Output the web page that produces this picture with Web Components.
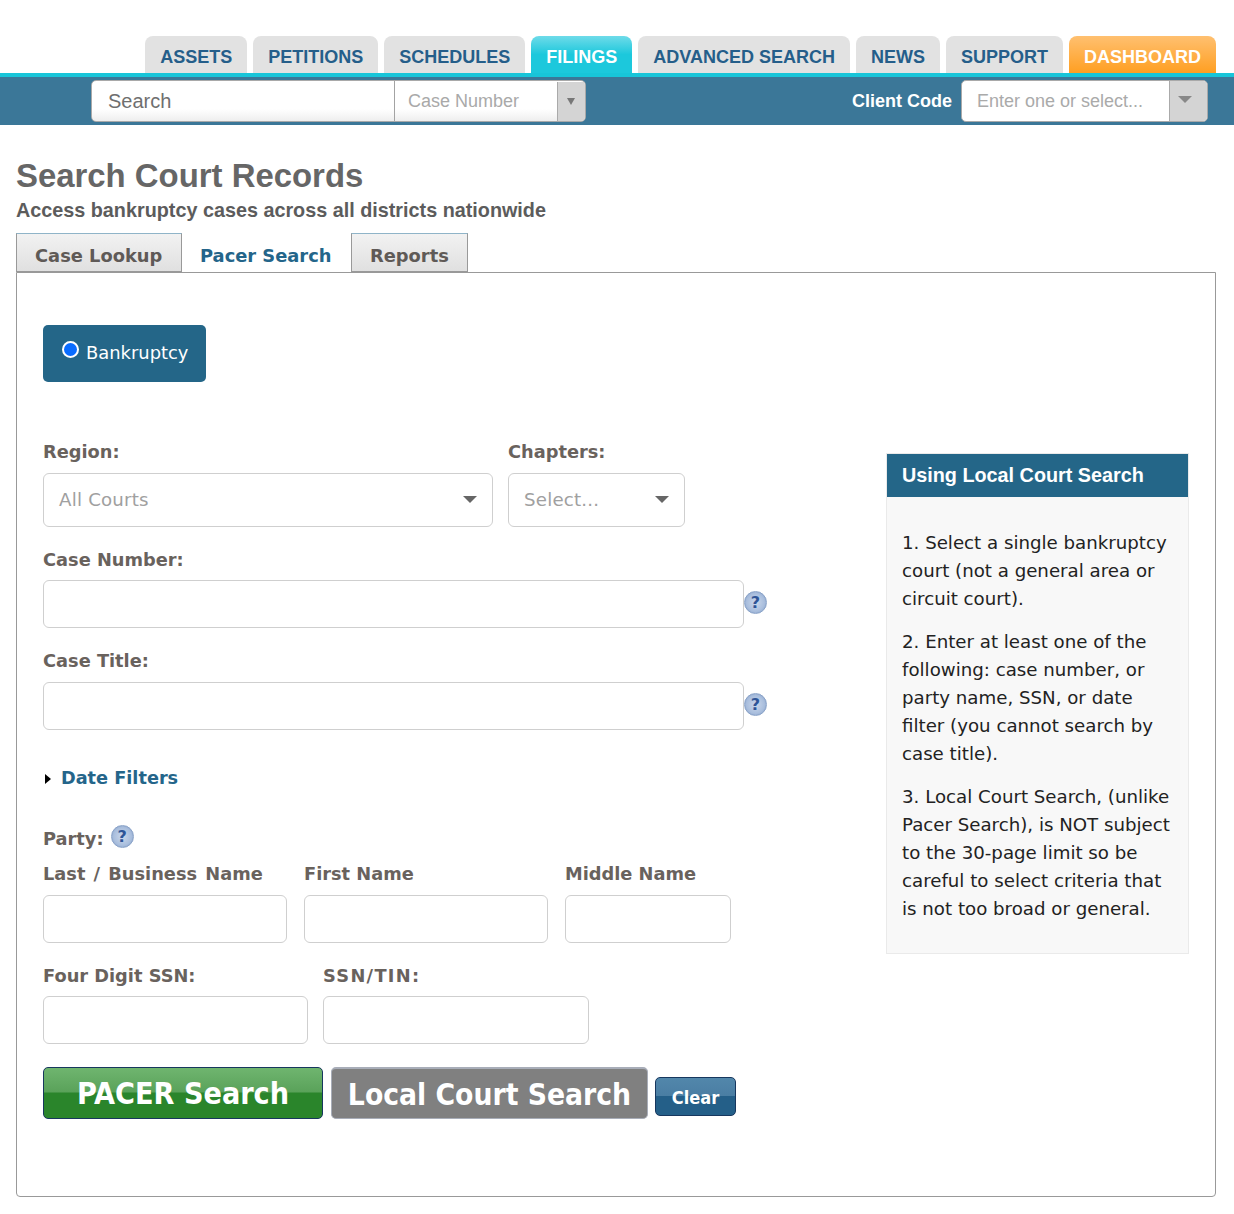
<!DOCTYPE html>
<html>
<head>
<meta charset="utf-8">
<title>Search Court Records</title>
<style>
  html, body { margin: 0; padding: 0; background: #fff; }
  body { font-family: "DejaVu Sans", sans-serif; }
</style>
</head>
<body>
<top-nav>
  <nav-tab>ASSETS</nav-tab>
  <nav-tab>PETITIONS</nav-tab>
  <nav-tab>SCHEDULES</nav-tab>
  <nav-tab kind="active">FILINGS</nav-tab>
  <nav-tab>ADVANCED SEARCH</nav-tab>
  <nav-tab>NEWS</nav-tab>
  <nav-tab>SUPPORT</nav-tab>
  <nav-tab kind="dash">DASHBOARD</nav-tab>
</top-nav>
<search-bar></search-bar>
<page-title heading="Search Court Records">Access bankruptcy cases across all districts nationwide</page-title>
<record-tabs></record-tabs>
<search-panel>
  <pacer-form></pacer-form>
  <info-box slot="aside" heading="Using Local Court Search">
    <p>1. Select a single bankruptcy court (not a general area or circuit court).</p>
    <p>2. Enter at least one of the following: case number, or party name, SSN, or date filter (you cannot search by case title).</p>
    <p>3. Local Court Search, (unlike Pacer Search), is NOT subject to the 30-page limit so be careful to select criteria that is not too broad or general.</p>
  </info-box>
</search-panel>

<script>
class NavTab extends HTMLElement {
  constructor() {
    super();
    const shadow = this.attachShadow({ mode: "open" });
    shadow.innerHTML = `
      <style>
        :host {
          display: block;
          height: 37px;
          padding: 0 15px;
          border-radius: 8px 8px 0 0;
          background: #e2e2e2;
          color: #255e8a;
          font: bold 18px/42px "Liberation Sans", sans-serif;
          white-space: nowrap;
        }
        :host([kind="active"]) {
          background: linear-gradient(#6fdbe9, #1cc8dc 50%);
          color: #fff;
        }
        :host([kind="dash"]) {
          background: linear-gradient(#ffc070, #ff9f22);
          color: #fff;
        }
      </style>
      <slot></slot>
    `;
  }
}

class TopNav extends HTMLElement {
  constructor() {
    super();
    const shadow = this.attachShadow({ mode: "open" });
    shadow.innerHTML = `
      <style>
        :host {
          display: flex;
          justify-content: flex-end;
          gap: 6px;
          padding: 36px 18px 0 0;
          border-bottom: 4px solid #18c5d9;
        }
      </style>
      <slot></slot>
    `;
  }
}

class SearchBar extends HTMLElement {
  constructor() {
    super();
    const shadow = this.attachShadow({ mode: "open" });
    shadow.innerHTML = `
      <style>
        :host {
          display: flex;
          align-items: center;
          height: 48px;
          padding: 0 26px 0 91px;
          background: #3b7798;
          font-family: "Liberation Sans", sans-serif;
        }
        .combo {
          display: flex;
          width: 495px;
          height: 42px;
          box-sizing: border-box;
          border: 1px solid #a9a9a9;
          border-radius: 5px;
          background: linear-gradient(#fff 70%, #eee);
          overflow: hidden;
        }
        .term {
          width: 303px;
          padding-left: 16px;
          box-sizing: border-box;
          border-right: 1px solid #a3a3a3;
          font-size: 20px;
          line-height: 40px;
          color: #6f6f6f;
        }
        .kind {
          flex: 1;
          padding-left: 13px;
          font-size: 18px;
          line-height: 40px;
          color: #a9a9a9;
        }
        .drop {
          display: flex;
          align-items: center;
          justify-content: center;
          width: 27px;
          margin-top: 1px;
          background: #d4d4d4;
          border-left: 1px solid #aaa;
        }
        .tri {
          width: 0;
          height: 0;
          margin-right: 2px;
          border: 4px solid transparent;
          border-top: 7px solid #777;
          border-bottom: 0;
        }
        .client {
          margin-left: auto;
          margin-right: 9px;
          color: #fff;
          font-weight: bold;
          font-size: 18px;
        }
        .code {
          display: flex;
          width: 247px;
          height: 42px;
          box-sizing: border-box;
          border: 1px solid #a9a9a9;
          border-radius: 5px;
          background: #fff;
          overflow: hidden;
        }
        .code span {
          flex: 1;
          padding-left: 15px;
          font-size: 18px;
          line-height: 40px;
          color: #aaa;
        }
        .code .drop { width: 37px; margin: 0; }
        .code .tri { border-width: 7px 7px 0; border-top-color: #888; border-style: solid; border-left-color: transparent; border-right-color: transparent; margin: 0 7px 3px 0; }
      </style>
      <div class="combo">
        <div class="term">Search</div>
        <div class="kind">Case Number</div>
        <div class="drop"><div class="tri"></div></div>
      </div>
      <div class="client">Client Code</div>
      <div class="code"><span>Enter one or select...</span><div class="drop"><div class="tri"></div></div></div>
    `;
  }
}

class PageTitle extends HTMLElement {
  constructor() {
    super();
    const shadow = this.attachShadow({ mode: "open" });
    shadow.innerHTML = `
      <style>
        :host {
          display: block;
          padding: 31px 16px 0;
          font-family: "Liberation Sans", sans-serif;
          color: #666;
        }
        h1 {
          margin: 0;
          font-size: 32.9px;
          line-height: 40px;
          font-weight: bold;
        }
        div {
          font-size: 19.8px;
          line-height: 28px;
          font-weight: bold;
          color: #5c5c5c;
        }
      </style>
      <h1></h1>
      <div><slot></slot></div>
    `;
    shadow.querySelector("h1").textContent = this.getAttribute("heading");
  }
}

class RecordTabs extends HTMLElement {
  constructor() {
    super();
    const shadow = this.attachShadow({ mode: "open" });
    shadow.innerHTML = `
      <style>
        :host {
          display: flex;
          margin: 9px 0 0 16px;
          height: 39px;
          font: bold 17.85px/43px "DejaVu Sans", sans-serif;
          position: relative;
          z-index: 1;
        }
        .tab {
          box-sizing: border-box;
          padding: 0 0 0 18px;
          border: 1px solid #999;
          border-top-color: #8fb4c8;
          background: linear-gradient(#f2f2f2, #e0e0e0);
          color: #5f5a57;
          white-space: nowrap;
        }
        .tab.on {
          background: #fff;
          color: #24658a;
          border: 0;
          border-top: 1px solid #fff;
          height: 39px;
        }
      </style>
      <div class="tab" style="width:166px">Case Lookup</div>
      <div class="tab on" style="width:169px">Pacer Search</div>
      <div class="tab" style="width:117px">Reports</div>
    `;
  }
}

class SearchPanel extends HTMLElement {
  constructor() {
    super();
    const shadow = this.attachShadow({ mode: "open" });
    shadow.innerHTML = `
      <style>
        :host {
          display: flex;
          justify-content: space-between;
          width: 1200px;
          height: 925px;
          box-sizing: border-box;
          margin: 0 0 0 16px;
          padding: 52px 26px 0 26px;
          border: 1px solid #999;
          border-radius: 0 0 4px 4px;
        }
        .side { padding-top: 128px; }
      </style>
      <slot></slot>
      <div class="side"><slot name="aside"></slot></div>
    `;
  }
}

class FormField extends HTMLElement {
  constructor() {
    super();
    const shadow = this.attachShadow({ mode: "open" });
    shadow.innerHTML = `
      <style>
        :host {
          display: block;
          width: var(--w, 244px);
        }
        label {
          display: block;
          height: 22px;
          margin-bottom: var(--gap, 11px);
          font: bold 17.8px/24px "DejaVu Sans", sans-serif;
          letter-spacing: var(--ls, 0);
          word-spacing: var(--ws, 0);
          color: #69625d;
          white-space: nowrap;
        }
        .box {
          display: flex;
          align-items: center;
          justify-content: space-between;
          height: 48px;
          box-sizing: border-box;
          padding: 0 15px 1px;
          border: 1px solid #cfcfcf;
          border-radius: 6px;
          background: #fff;
          font-size: 18.2px;
          letter-spacing: .2px;
          color: #a0a0a0;
        }
        :host([select]) .box { height: 54px; }
        .tri {
          display: none;
          width: 0;
          height: 0;
          border-style: solid;
          border-width: 7px 7.5px 0;
          border-color: #666 transparent transparent;
        }
        :host([select]) .tri { display: block; }
      </style>
      <label></label>
      <div class="box"><span></span><div class="tri"></div></div>
    `;
    shadow.querySelector("label").textContent = this.getAttribute("label");
    shadow.querySelector("span").textContent = this.getAttribute("placeholder") || "";
  }
}

class HelpIcon extends HTMLElement {
  constructor() {
    super();
    const shadow = this.attachShadow({ mode: "open" });
    shadow.innerHTML = `
      <style>
        :host {
          display: inline-flex;
          align-items: center;
          justify-content: center;
          width: 23px;
          height: 23px;
          box-sizing: border-box;
          padding-top: 1px;
          border-radius: 50%;
          border: 1px solid #8aa3c8;
          background: radial-gradient(circle at 50% 50%, #ccd8eb 0, #a9bedd 60%, #7490bf 100%);
          color: #2f5597;
          font: bold 16px/1 "DejaVu Sans", sans-serif;
        }
      </style>
      ?
    `;
  }
}

class PacerForm extends HTMLElement {
  constructor() {
    super();
    const shadow = this.attachShadow({ mode: "open" });
    shadow.innerHTML = `
      <style>
        :host { display: block; width: 724px; font-family: "DejaVu Sans", sans-serif; }
        .court {
          display: flex;
          align-items: center;
          width: 163px;
          height: 57px;
          box-sizing: border-box;
          padding: 0 0 2px 19px;
          border-radius: 5px;
          background: #246688;
          color: #fff;
          font-size: 17.9px;
        }
        .radio {
          width: 17px;
          height: 17px;
          box-sizing: border-box;
          margin: -7px 7px 0 0;
          border: 2px solid #fff;
          border-radius: 50%;
          background: #0a6cff;
        }
        .row { display: flex; gap: 15px; }
        .top { margin-top: 58px; }
        .wide { display: flex; align-items: center; margin-top: 21px; }
        .wide help-icon { margin-top: 29px; }
        .names { gap: 17px; margin-top: 11px; }
        .date {
          display: flex;
          align-items: center;
          margin-top: 36px;
          height: 24px;
          font: bold 17.7px/24px "DejaVu Sans", sans-serif;
          color: #24658a;
        }
        .arrow {
          width: 0;
          height: 0;
          margin: 2px 10px 0 2px;
          border-style: solid;
          border-width: 5px 0 5px 6px;
          border-color: transparent transparent transparent #000;
        }
        .party {
          display: flex;
          align-items: center;
          gap: 7px;
          margin-top: 37px;
          height: 24px;
          font: bold 17.8px/24px "DejaVu Sans", sans-serif;
          color: #69625d;
        }
        .party help-icon { margin-top: -6px; }
        .ssn { margin-top: 21px; }
        .actions { display: flex; align-items: flex-end; gap: 8px; margin-top: 23px; }
        .actions action-btn[kind="clear"] { margin-left: -1px; }
      </style>
      <div class="court"><div class="radio"></div>Bankruptcy</div>
      <div class="row top">
        <form-field select label="Region:" placeholder="All Courts" style="--w:450px"></form-field>
        <form-field select label="Chapters:" placeholder="Select..." style="--w:177px"></form-field>
      </div>
      <div class="wide"><form-field label="Case Number:" style="--w:701px;--gap:10px"></form-field><help-icon></help-icon></div>
      <div class="wide"><form-field label="Case Title:" style="--w:701px"></form-field><help-icon></help-icon></div>
      <div class="date"><div class="arrow"></div>Date Filters</div>
      <div class="party">Party: <help-icon></help-icon></div>
      <div class="row names">
        <form-field label="Last / Business Name" style="--w:244px;--ws:2px"></form-field>
        <form-field label="First Name" style="--w:244px"></form-field>
        <form-field label="Middle Name" style="--w:166px"></form-field>
      </div>
      <div class="row ssn">
        <form-field label="Four Digit SSN:" style="--w:265px;--gap:10px"></form-field>
        <form-field label="SSN/TIN:" style="--w:266px;--gap:10px;--ls:1.3px"></form-field>
      </div>
      <div class="actions">
        <action-btn kind="go">PACER Search</action-btn>
        <action-btn kind="local">Local Court Search</action-btn>
        <action-btn kind="clear">Clear</action-btn>
      </div>
    `;
  }
}

class ActionBtn extends HTMLElement {
  constructor() {
    super();
    const shadow = this.attachShadow({ mode: "open" });
    shadow.innerHTML = `
      <style>
        :host {
          display: flex;
          align-items: center;
          justify-content: center;
          box-sizing: border-box;
          height: 52px;
          padding-top: 1px;
          border-radius: 5px;
          color: #fff;
          font: bold 30.2px "DejaVu Sans Condensed", "DejaVu Sans", sans-serif;
          white-space: nowrap;
        }
        :host([kind="go"]) {
          width: 280px;
          border: 1px solid #17375e;
          background: linear-gradient(#6fb56f, #5aa25a 48%, #2a852b 50%);
        }
        :host([kind="local"]) {
          width: 317px;
          border: 1px solid #a8adb8;
          border-top-width: 2px;
          background: #808080;
          font-size: 29.7px;
        }
        :host([kind="clear"]) {
          width: 81px;
          height: 39px;
          padding-top: 2px;
          margin-bottom: 3px;
          border: 1px solid #17375e;
          background: linear-gradient(#5287ab, #4a7ea3 48%, #245f88 50%);
          font-size: 18px;
        }
      </style>
      <slot></slot>
    `;
  }
}

class InfoBox extends HTMLElement {
  constructor() {
    super();
    const shadow = this.attachShadow({ mode: "open" });
    shadow.innerHTML = `
      <style>
        :host {
          display: block;
          width: 303px;
          height: 501px;
          box-sizing: border-box;
          border: 1px solid #eaeaea;
          background: #f8f8f8;
          color: #222;
          font: 18.2px/28px "DejaVu Sans", sans-serif;
        }
        h3 {
          margin: 0;
          height: 43px;
          padding-left: 15px;
          background: #246688;
          color: #fff;
          font: bold 19.8px/43px "Liberation Sans", sans-serif;
        }
        .body { padding: 32px 15px 0; }
        ::slotted(p) { margin: 0 0 15px; }
      </style>
      <h3></h3>
      <div class="body"><slot></slot></div>
    `;
    shadow.querySelector("h3").textContent = this.getAttribute("heading");
  }
}

customElements.define("nav-tab", NavTab);
customElements.define("top-nav", TopNav);
customElements.define("search-bar", SearchBar);
customElements.define("page-title", PageTitle);
customElements.define("record-tabs", RecordTabs);
customElements.define("search-panel", SearchPanel);
customElements.define("form-field", FormField);
customElements.define("help-icon", HelpIcon);
customElements.define("action-btn", ActionBtn);
customElements.define("pacer-form", PacerForm);
customElements.define("info-box", InfoBox);
</script>
</body>
</html>
